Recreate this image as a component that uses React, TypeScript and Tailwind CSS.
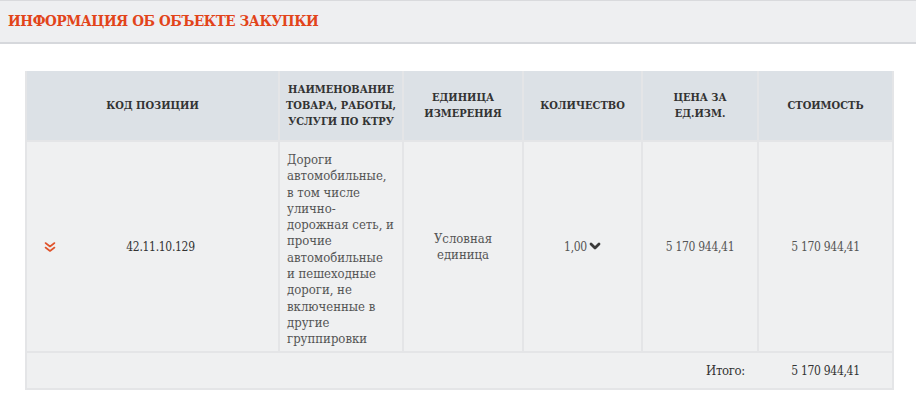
const font = { fontFamily: '"DejaVu Serif Condensed", "DejaVu Serif", "Liberation Serif", serif' };

const headers = [
    ["КОД ПОЗИЦИИ"],
    ["НАИМЕНОВАНИЕ", "ТОВАРА, РАБОТЫ,", "УСЛУГИ ПО КТРУ"],
    ["ЕДИНИЦА", "ИЗМЕРЕНИЯ"],
    ["КОЛИЧЕСТВО"],
    ["ЦЕНА ЗА", "ЕД.ИЗМ."],
    ["СТОИМОСТЬ"],
];

const description = [
    "Дороги",
    "автомобильные,",
    "в том числе",
    "улично-",
    "дорожная сеть, и",
    "прочие",
    "автомобильные",
    "и пешеходные",
    "дороги, не",
    "включенные в",
    "другие",
    "группировки",
];

function DoubleChevron() {
    return (
        <svg width="12" height="12" viewBox="0 0 12 12" fill="none" stroke="#e0532b" strokeWidth="1.6" strokeLinecap="round" strokeLinejoin="round">
            <path d="M1.5 2 L6 5.5 L10.5 2" />
            <path d="M1.5 6.5 L6 10 L10.5 6.5" />
        </svg>
    );
}

function ChevronDown() {
    return (
        <svg width="12" height="9" viewBox="0 0 12 9" fill="none" stroke="#3a3a3a" strokeWidth="2.8" strokeLinecap="round" strokeLinejoin="round">
            <path d="M2 2 L6 6 L10 2" />
        </svg>
    );
}

export default function App() {
    return (
        <div className="w-[916px] h-[393px] bg-white overflow-hidden font-stretch-condensed" style={font}>
            <div className="h-[44px] bg-[#eeeff1] border-t border-[#d9dadd] border-b-2 border-b-[#d6d8dc] flex items-center px-[8px]">
                <h2 className="text-[15px] font-bold text-[#e2441a] tracking-[-0.4px]">ИНФОРМАЦИЯ ОБ ОБЪЕКТЕ ЗАКУПКИ</h2>
            </div>

            <div className="ml-[25px] mt-[27px] w-[869px] bg-[#e4e5e7] px-[2px] pb-[2px]">
                <div className="grid grid-cols-[251px_122px_118px_117px_114px_133px] gap-[2px]">
                    {headers.map((lines, i) => (
                        <div key={i} className="h-[69px] bg-[#dce1e6] flex flex-col items-center justify-center text-center px-[3px] text-[11px] font-bold leading-[16px] text-[#333]">
                            {lines.map((l, j) => (
                                <span key={j} className="whitespace-nowrap">{l}</span>
                            ))}
                        </div>
                    ))}

                    <div className="h-[209px] bg-[#eff0f1] flex items-center">
                        <div className="ml-[17px] w-[12px] flex items-center"><DoubleChevron /></div>
                        <div className="flex-1 text-center pr-[13px] text-[12px] text-[#333] tracking-[-0.3px]">42.11.10.129</div>
                    </div>
                    <div className="bg-[#eff0f1] pl-[7px] pr-[4px] pt-[10px] flex flex-col text-[13px] leading-[16.3px] text-[#555]">
                        {description.map((l, i) => (
                            <span key={i} className="whitespace-nowrap">{l}</span>
                        ))}
                    </div>
                    <div className="bg-[#eff0f1] flex items-center justify-center text-center text-[13px] leading-[16px] text-[#555]">
                        Условная<br />единица
                    </div>
                    <div className="bg-[#eff0f1] flex items-center justify-center gap-[2px] text-[12px] text-[#555]">
                        <span className="tracking-[-0.3px]">1,00</span>
                        <ChevronDown />
                    </div>
                    <div className="bg-[#eff0f1] flex items-center justify-center text-[12px] text-[#555] tracking-[-0.3px]">5 170 944,41</div>
                    <div className="bg-[#eff0f1] flex items-center justify-center text-[12px] text-[#555] tracking-[-0.3px]">5 170 944,41</div>

                    <div className="col-span-6 h-[35px] bg-[#eff0f1] flex items-center justify-end text-[12px] text-[#333] tracking-[-0.3px]">
                        <span className="mr-[14px] text-[13px]">Итого:</span>
                        <span className="w-[133px] text-center">5 170 944,41</span>
                    </div>
                </div>
            </div>
        </div>
    );
}
